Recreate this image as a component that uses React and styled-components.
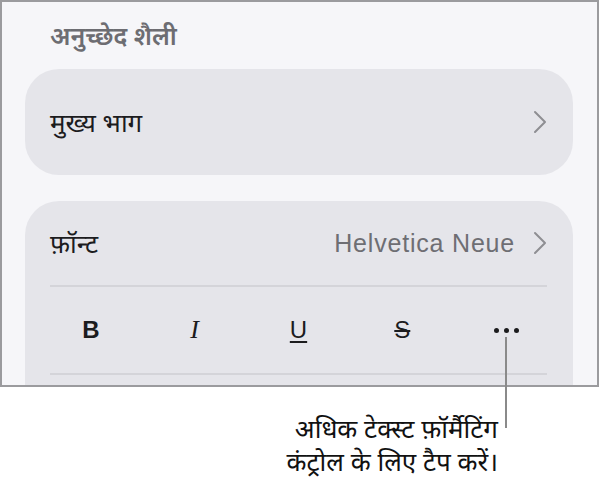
import React from "react";
import styled, { createGlobalStyle } from "styled-components";

const GlobalStyle = createGlobalStyle`
  body {
    margin: 0;
    background: #ffffff;
    font-family: "Noto Sans", "Liberation Sans", sans-serif;
  }
`;

const Chevron = () => (
  <svg width="14" height="24" viewBox="0 0 14 24">
    <path
      d="M2 2 L12 12 L2 22"
      fill="none"
      stroke="#8e8e93"
      strokeWidth="2"
      strokeLinecap="round"
      strokeLinejoin="round"
    />
  </svg>
);

const formats = [
  { key: "b", label: "B", kind: "bold" },
  { key: "i", label: "I", kind: "italic" },
  { key: "u", label: "U", kind: "under" },
  { key: "s", label: "S", kind: "strike" },
];

export default function App() {
  return (
    <Page>
      <GlobalStyle />
      <Frame>
        <SectionTitle>अनुच्छेद शैली</SectionTitle>
        <Card>
          <Row $height={106}>
            <Label>मुख्य भाग</Label>
            <Chevron />
          </Row>
        </Card>
        <FontCard>
          <Row $height={84}>
            <Label>फ़ॉन्ट</Label>
            <Value>
              <span>Helvetica Neue</span>
              <Chevron />
            </Value>
          </Row>
          <Divider />
          <FormatRow>
            {formats.map((f) => (
              <FormatBtn key={f.key} $kind={f.kind}>
                {f.label}
              </FormatBtn>
            ))}
            <MoreBtn>
              <Dot />
              <Dot />
              <Dot />
            </MoreBtn>
          </FormatRow>
          <Divider />
        </FontCard>
      </Frame>
      <Leader />
      <Callout>
        <CalloutLine>अधिक टेक्स्ट फ़ॉर्मैटिंग</CalloutLine>
        <CalloutLine>कंट्रोल के लिए टैप करें।</CalloutLine>
      </Callout>
    </Page>
  );
}

const Page = styled.div`
  position: relative;
  width: 599px;
  height: 481px;
  overflow: hidden;
`;

const Frame = styled.div`
  box-sizing: border-box;
  width: 599px;
  height: 387px;
  border: 2px solid #9b9b9e;
  background: #f6f6f9;
  overflow: hidden;
  padding: 0 24px 0 23px;
`;

const SectionTitle = styled.div`
  box-sizing: border-box;
  height: 67px;
  padding: 16px 0 0 25px;
  font-size: 25px;
  font-weight: 600;
  color: #6d6d72;
`;

const Card = styled.div`
  background: #e5e5ea;
  border-radius: 34px;
  padding: 0 26px 0 25px;
`;

const FontCard = styled(Card)`
  margin-top: 26px;
  border-radius: 34px 34px 0 0;
  height: 240px;
`;

const Row = styled.div`
  display: flex;
  align-items: center;
  justify-content: space-between;
  height: ${(p) => p.$height}px;
`;

const Label = styled.span`
  font-size: 26px;
  color: #1c1c1e;
`;

const Value = styled.span`
  display: flex;
  align-items: center;
  gap: 18px;
  font-family: "Liberation Sans", Arial, sans-serif;
  font-size: 25px;
  letter-spacing: 0.8px;
  color: #6e6e73;
`;

const Divider = styled.div`
  height: 2px;
  background: #d4d4d9;
`;

const FormatRow = styled.div`
  display: grid;
  grid-template-columns: repeat(5, 1fr);
  align-items: center;
  height: 86px;
  margin: 0 -11px;
`;

const FormatBtn = styled.span`
  justify-self: center;
  font-family: ${(p) =>
    p.$kind === "italic" ? '"Liberation Serif", serif' : '"Liberation Sans", sans-serif'};
  font-size: ${(p) => (p.$kind === "italic" ? "26px" : "24px")};
  font-weight: ${(p) => (p.$kind === "bold" ? 700 : 400)};
  font-style: ${(p) => (p.$kind === "italic" ? "italic" : "normal")};
  text-decoration: ${(p) =>
    p.$kind === "under" ? "underline" : p.$kind === "strike" ? "line-through" : "none"};
  text-decoration-thickness: 2px;
  text-underline-offset: 3px;
  color: #1c1c1e;
`;

const MoreBtn = styled.span`
  justify-self: center;
  display: flex;
  gap: 5px;
`;

const Dot = styled.span`
  width: 5px;
  height: 5px;
  border-radius: 50%;
  background: #1c1c1e;
`;

const Leader = styled.div`
  position: absolute;
  left: 505px;
  top: 337px;
  width: 2px;
  height: 91px;
  background: #8a8a8a;
`;

const Callout = styled.div`
  width: 498px;
  margin-top: 25px;
  text-align: right;
  font-size: 26px;
  color: #111111;
`;

const CalloutLine = styled.div`
  line-height: 33px;
`;
